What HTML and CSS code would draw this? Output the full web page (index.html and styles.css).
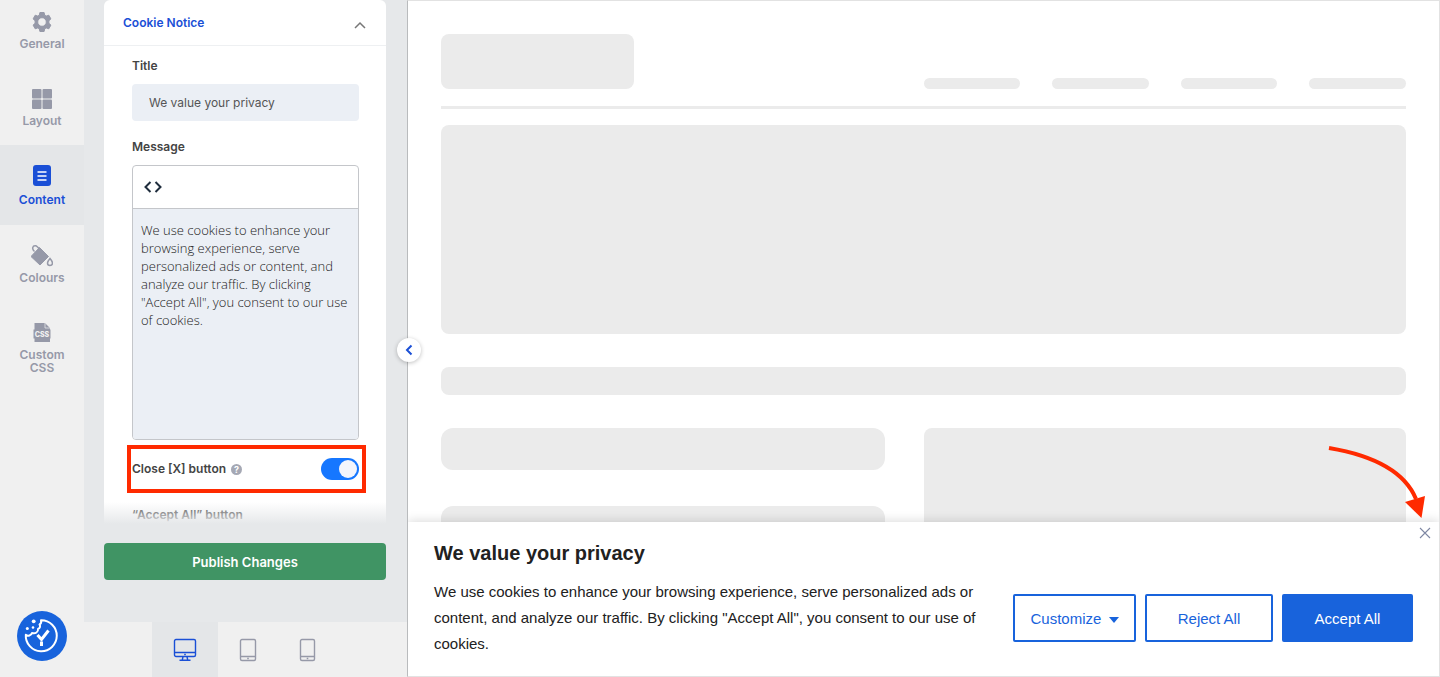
FILE: index.html
```html
<!DOCTYPE html>
<html lang="en">
  <head>
    <meta charset="UTF-8" />
    <meta name="viewport" content="width=device-width, initial-scale=1.0" />
    <title>Customize Banner</title>
    <link rel="stylesheet" href="styles.css">
  </head>
  <body>
    <div class="app">
      <nav class="side-nav">
        <a href="#general" class="nav-item">
          <svg width="22" height="22" viewBox="0 0 22 22">
            <path fill="currentColor" stroke="currentColor" stroke-linejoin="round" fill-rule="evenodd" d="M8.900 1.500h4.200l.6 2.700 1.500.9 2.600-.9 2.100 3.700-2 1.800v2.600l2 1.800-2.100 3.700-2.600-.9-1.500.9-.6 2.700H8.900l-.6-2.700-1.500-.9-2.600.9-2.100-3.700 2-1.800V9.700l-2-1.800 2.100-3.700 2.600.9 1.500-.9zM11 6.700a4.300 4.300 0 1 0 0 8.600 4.300 4.300 0 0 0 0-8.600z" />
          </svg>
          <span>General</span>
        </a>
        <a href="#layout" class="nav-item">
          <svg width="22" height="22" viewBox="0 0 22 22" fill="currentColor">
            <rect x="1" y="1" width="9.500" height="9.500" rx="1" />
            <rect x="11.500" y="1" width="9.500" height="9.500" rx="1" />
            <rect x="1" y="11.500" width="9.500" height="9.500" rx="1" />
            <rect x="11.500" y="11.500" width="9.500" height="9.500" rx="1" />
          </svg>
          <span>Layout</span>
        </a>
        <a href="#content" class="nav-item active">
          <svg width="22" height="22" viewBox="0 0 22 22">
            <rect x="2" y="0" width="18" height="21" rx="3" fill="currentColor" />
            <path d="M6.500 7h9M6.500 11h9M6.500 15h9" stroke="#fff" stroke-width="1.500" />
          </svg>
          <span>Content</span>
        </a>
        <a href="#colours" class="nav-item">
          <svg width="22" height="22" viewBox="0 0 22 22">
            <path d="M3.500 6.500C.5 4 1.500.5 4.500.8c1.500.2 2.500 1.500 4.500 4.200" fill="none" stroke="currentColor" stroke-width="1.500" />
            <path d="M8.500 2.500 17.500 11.500 9 20 0 11.500z" fill="currentColor" stroke="currentColor" stroke-linejoin="round" />
            <path d="M19 13.500c1.700 2 2.500 3.300 2.500 4.500a2.400 2.400 0 0 1-5 0c0-1.200.8-2.500 2.500-4.500z" fill="none" stroke="currentColor" stroke-width="1.500" />
          </svg>
          <span>Colours</span>
        </a>
        <a href="#custom-css" class="nav-item">
          <svg width="22" height="22" viewBox="0 0 22 22">
            <path fill="currentColor" d="M3.500 1H14l5 5v1.500h.5v9H19V20H3.500v-3.500H2.500v-9h1z" />
            <path d="M14 1v5h5" fill="none" stroke="#f0f0f0" stroke-width=".7" />
            <text x="11" y="15" class="css-text">CSS</text>
          </svg>
          <span>Custom<br>CSS</span>
        </a>

        <button class="cookie-badge" aria-label="Cookie settings">
          <svg width="50" height="50" viewBox="0 0 50 50" fill="none" stroke="#fff">
            <path d="M24 9.200a15.500 15.500 0 1 1-15.200 14.500c2 1.800 5.500.8 6.200-1.700 3.500.8 6.500-.8 6-4 2.300-1 2.500-3 1.500-4.500 1.500-.8 2-2.500 1.500-4.300z" stroke-width="2" stroke-linejoin="round" />
            <path d="m20.500 24 4 4.500 7-9" stroke-width="3" />
            <path d="M24.500 30.500v4.500" stroke-width="3" />
            <circle cx="16.700" cy="10.300" r="1.900" fill="#fff" stroke="none" />
            <circle cx="10.300" cy="17.500" r="1.500" fill="#fff" stroke="none" />
            <circle cx="16" cy="16.500" r="1.300" fill="#fff" stroke="none" />
          </svg>
        </button>
      </nav>

      <div class="editor">
        <div class="panel">
          <div class="card">
            <button class="card-header" aria-expanded="true">
              <span>Cookie Notice</span>
              <svg width="12" height="8" viewBox="0 0 12 8" fill="none" stroke="#777" stroke-width="1.500">
                <path d="M1 7l5-5 5 5" />
              </svg>
            </button>
            <div class="card-body">
              <label for="title">Title</label>
              <input type="text" id="title" value="We value your privacy" />

              <label for="message">Message</label>
              <div class="rich-text">
                <div class="toolbar">
                  <button aria-label="Edit source">
                    <svg width="20" height="12" viewBox="0 0 20 12" fill="none" stroke="#1f2d3d" stroke-width="2">
                      <path d="M7.500 1l-5 5 5 5M12.500 1l5 5-5 5" />
                    </svg>
                  </button>
                </div>
                <textarea id="message">We use cookies to enhance your browsing experience, serve personalized ads or content, and analyze our traffic. By clicking "Accept All", you consent to our use of cookies.</textarea>
              </div>

              <div class="switch-row">
                <label for="close-button">Close [X] button</label>
                <span class="help">?</span>
                <input type="checkbox" id="close-button" class="switch" checked />
              </div>

              <div class="next-label">“Accept All” button</div>
            </div>
          </div>
          <button class="publish">Publish Changes</button>
        </div>

        <div class="devices">
          <button class="device active" aria-label="Desktop">
            <svg width="24" height="24" viewBox="0 0 24 24" fill="none" stroke="currentColor" stroke-width="1.400">
              <rect x="1.500" y="1.500" width="21" height="17" rx="1.500" />
              <path d="M1.500 14.500h21M10 18.500l-.7 3.500M14 18.500l.7 3.500M6.500 22.300h11" />
              <path d="M11.200 16.500h1.600" />
            </svg>
          </button>
          <button class="device" aria-label="Tablet">
            <svg width="24" height="24" viewBox="0 0 24 24" fill="none" stroke="currentColor" stroke-width="1.400">
              <rect x="4.500" y="1.500" width="15" height="21" rx="1.500" />
              <path d="M4.500 18.500h15M11.200 20.500h1.600" />
            </svg>
          </button>
          <button class="device" aria-label="Mobile">
            <svg width="24" height="24" viewBox="0 0 24 24" fill="none" stroke="currentColor" stroke-width="1.400">
              <rect x="4.500" y="1.500" width="14" height="21" rx="1.500" />
              <path d="M4.500 18.500h14M10.700 20.500h1.600" />
            </svg>
          </button>
        </div>
      </div>

      <main class="preview">
        <button class="collapse" aria-label="Collapse panel">
          <svg width="8" height="12" viewBox="0 0 8 12" fill="none" stroke="#1a4fd6" stroke-width="2">
            <path d="M6.500 1.500L2 6l4.500 4.500" />
          </svg>
        </button>

        <div class="skeleton">
          <div class="sk-header">
            <div class="sk logo"></div>
            <div class="sk-menu">
              <div class="sk"></div>
              <div class="sk"></div>
              <div class="sk"></div>
              <div class="sk"></div>
            </div>
          </div>
          <div class="sk-line"></div>
          <div class="sk hero"></div>
          <div class="sk bar"></div>
          <div class="sk-columns">
            <div class="sk-stack">
              <div class="sk"></div>
              <div class="sk"></div>
            </div>
            <div class="sk"></div>
          </div>
        </div>

        <section class="banner">
          <button class="banner-close" aria-label="Close">
            <svg width="12" height="12" viewBox="0 0 12 12" stroke="#7e87a3" stroke-width="1.100">
              <path d="M1 1l10 10M11 1L1 11" />
            </svg>
          </button>
          <h2>We value your privacy</h2>
          <div class="banner-row">
            <p>We use cookies to enhance your browsing experience, serve personalized ads or content, and analyze our traffic. By clicking "Accept All", you consent to our use of cookies.</p>
            <div class="banner-buttons">
              <button class="btn customize">Customize <span class="caret"></span></button>
              <button class="btn reject">Reject All</button>
              <button class="btn accept">Accept All</button>
            </div>
          </div>
        </section>

        <svg class="arrow" width="100" height="76" viewBox="0 0 100 76">
          <path d="M4 6Q75 18 91 57" fill="none" stroke="#ff2a00" stroke-width="4" />
          <path d="M80 60l20-6-3.500 22z" fill="#ff2a00" />
        </svg>
      </main>
    </div>
  </body>
</html>
```

FILE: styles.css
```css
* {
  box-sizing: border-box;
}

body {
  margin: 0;
  font-family: Inter, "Liberation Sans", sans-serif;
  font-size: 12px;
  color: #444;
  background-color: #f0f0f0;
}

button {
  font-family: inherit;
  padding: 0;
  border: none;
  background: none;
  cursor: pointer;
}

svg {
  display: block;
}

.app {
  display: grid;
  grid-template-columns: 84px 323px 1fr;
  height: 100vh;
}

/* Left navigation */
.side-nav {
  display: flex;
  flex-direction: column;
  align-items: stretch;
}

.nav-item {
  display: flex;
  flex-direction: column;
  align-items: center;
  gap: 4px;
  padding: 20px 0 18px;
  color: #9699a8;
  font-weight: 600;
  line-height: 13px;
  text-align: center;
  text-decoration: none;
}

.nav-item:first-child {
  padding-top: 11px;
}

.nav-item.active {
  gap: 6px;
  padding-bottom: 19px;
  color: #1a4fd6;
  background-color: #e4e6e8;
}

.css-text {
  fill: #f0f0f0;
  font-size: 7px;
  font-weight: 800;
  text-anchor: middle;
}

.cookie-badge {
  width: 50px;
  height: 50px;
  margin: auto auto 16px;
  border-radius: 50%;
  background-color: #1863dc;
}

/* Settings panel */
.editor {
  display: flex;
  flex-direction: column;
  min-height: 0;
}

.panel {
  flex: 1;
  display: flex;
  flex-direction: column;
  min-height: 0;
  padding: 0 21px 42px 20px;
  background-color: #e6e8ea;
}

.card {
  position: relative;
  flex: 1;
  min-height: 0;
  overflow: hidden;
  border-radius: 6px 6px 0 0;
  background-color: #fff;
}

/* Fade at the bottom of the scroll area */
.card::after {
  content: "";
  position: absolute;
  left: 0;
  right: 0;
  bottom: 0;
  height: 22px;
  background: linear-gradient(to bottom, rgba(230, 232, 234, 0), #e6e8ea);
}

.card-header {
  display: flex;
  justify-content: space-between;
  align-items: center;
  width: 100%;
  height: 46px;
  padding: 0 20px 0 19px;
  border-bottom: 1px solid #eef0f2;
  color: #1a4fd6;
  font-size: 12px;
  font-weight: 600;
}

.card-header svg {
  margin-top: 4px;
}

.card-body {
  padding: 12px 27px 0 28px;
}

.card-body label,
.next-label {
  display: block;
  font-weight: 600;
  line-height: 16px;
}

.card-body input[type="text"] {
  width: 100%;
  height: 37px;
  margin: 10px 0 18px;
  padding: 0 17px;
  border: none;
  border-radius: 4px;
  background-color: #ebeff5;
  color: #555;
  font-family: inherit;
  font-size: 12px;
}

.rich-text {
  height: 275px;
  margin: 10px 0 5px;
  border: 1px solid #c4c6ca;
  border-radius: 4px;
  overflow: hidden;
  display: flex;
  flex-direction: column;
}

.toolbar {
  display: flex;
  align-items: center;
  height: 43px;
  padding-left: 10px;
  border-bottom: 1px solid #c4c6ca;
}

.rich-text textarea {
  flex: 1;
  padding: 12px 8px;
  border: none;
  resize: none;
  background-color: #ebeff5;
  color: #222;
  font-family: "Open Sans", "Noto Sans", sans-serif;
  font-size: 13px;
  font-weight: 300;
  line-height: 18px;
}

.switch-row {
  display: flex;
  align-items: center;
  height: 48px;
  margin: 0 -7px 0 -5px;
  padding: 0 3px 0 1px;
  border: 4px solid #ff2a00;
}

.help {
  width: 11px;
  height: 11px;
  margin-left: 5px;
  border-radius: 50%;
  background-color: #a5a8b4;
  color: #fff;
  font-size: 9px;
  font-weight: 700;
  line-height: 11px;
  text-align: center;
}

.switch {
  appearance: none;
  display: flex;
  align-items: center;
  justify-content: flex-end;
  width: 38px;
  height: 22px;
  margin: 0 0 0 auto;
  padding: 2px;
  border-radius: 11px;
  background-color: #1677ff;
}

.switch::before {
  content: "";
  width: 18px;
  height: 18px;
  border-radius: 50%;
  background-color: #f3f5fc;
}

.next-label {
  margin-top: 14px;
}

.publish {
  height: 37px;
  margin-top: 19px;
  border-radius: 4px;
  background-color: #409464;
  color: #fff;
  font-size: 13px;
  font-weight: 600;
}

/* Device switcher */
.devices {
  display: flex;
  height: 55px;
  padding-left: 68px;
}

.device {
  display: flex;
  align-items: center;
  justify-content: center;
  width: 60px;
  color: #9699a8;
}

.device.active {
  width: 66px;
  color: #1a4fd6;
  background-color: #e4e6e8;
}

/* Site preview */
.preview {
  position: relative;
  min-width: 0;
  border: 1px solid #e2e2e2;
  border-left-color: #b9bbbd;
  background-color: #fff;
}

.collapse {
  position: absolute;
  top: 337px;
  left: -11px;
  display: flex;
  align-items: center;
  justify-content: center;
  width: 24px;
  height: 24px;
  border-radius: 50%;
  background-color: #fff;
  box-shadow: 0 1px 4px rgba(0, 0, 0, 0.25);
}

.skeleton {
  display: flex;
  flex-direction: column;
  height: 100%;
  padding: 33px 33px 0;
}

.sk {
  border-radius: 8px;
  background-color: #ebebeb;
}

.sk-header {
  display: flex;
  justify-content: space-between;
  align-items: flex-end;
}

.logo {
  width: 20%;
  height: 55px;
}

.sk-menu {
  display: grid;
  grid-template-columns: repeat(4, 1fr);
  gap: 32px;
  width: 50%;
}

.sk-menu .sk {
  height: 11px;
}

.sk-line {
  height: 3px;
  margin: 17px 0 16px;
  background-color: #ebebeb;
}

.hero {
  height: 209px;
}

.bar {
  height: 28px;
  margin: 33px 0;
}

.sk-columns {
  flex: 1;
  display: grid;
  grid-template-columns: 46% 50%;
  justify-content: space-between;
}

.sk-stack {
  display: flex;
  flex-direction: column;
  gap: 36px;
}

.sk-stack .sk {
  height: 42px;
  border-radius: 12px;
}

/* Cookie banner */
.banner {
  position: absolute;
  left: 0;
  right: 0;
  bottom: 0;
  padding: 18px 26px 19px;
  background-color: #fff;
  color: #212121;
  font-family: "Liberation Sans", Arial, sans-serif;
  box-shadow: 0 -1px 10px rgba(0, 0, 0, 0.15);
  clip-path: inset(-20px 0 0 0);
}

.banner h2 {
  margin: 0 0 13px;
  font-size: 20px;
  line-height: 26px;
}

.banner-row {
  display: flex;
  align-items: center;
  justify-content: space-between;
  gap: 20px;
}

.banner p {
  margin: 0;
  font-size: 15px;
  line-height: 26px;
}

.banner-buttons {
  display: flex;
  flex-shrink: 0;
  gap: 9px;
}

.btn {
  height: 48px;
  border: 2px solid #1863dc;
  border-radius: 2px;
  color: #1863dc;
  font-size: 15px;
}

.customize {
  width: 123px;
}

.caret {
  display: inline-block;
  margin-left: 3px;
  border: 5px solid transparent;
  border-top: 6px solid #1863dc;
  border-bottom: none;
  vertical-align: 1px;
}

.reject {
  width: 128px;
}

.accept {
  width: 131px;
  background-color: #1863dc;
  color: #fff;
}

.banner-close {
  position: absolute;
  top: 5px;
  right: 8px;
}

/* Arrow pointing at the close button */
.arrow {
  position: absolute;
  right: 14px;
  bottom: 158px;
}
```
